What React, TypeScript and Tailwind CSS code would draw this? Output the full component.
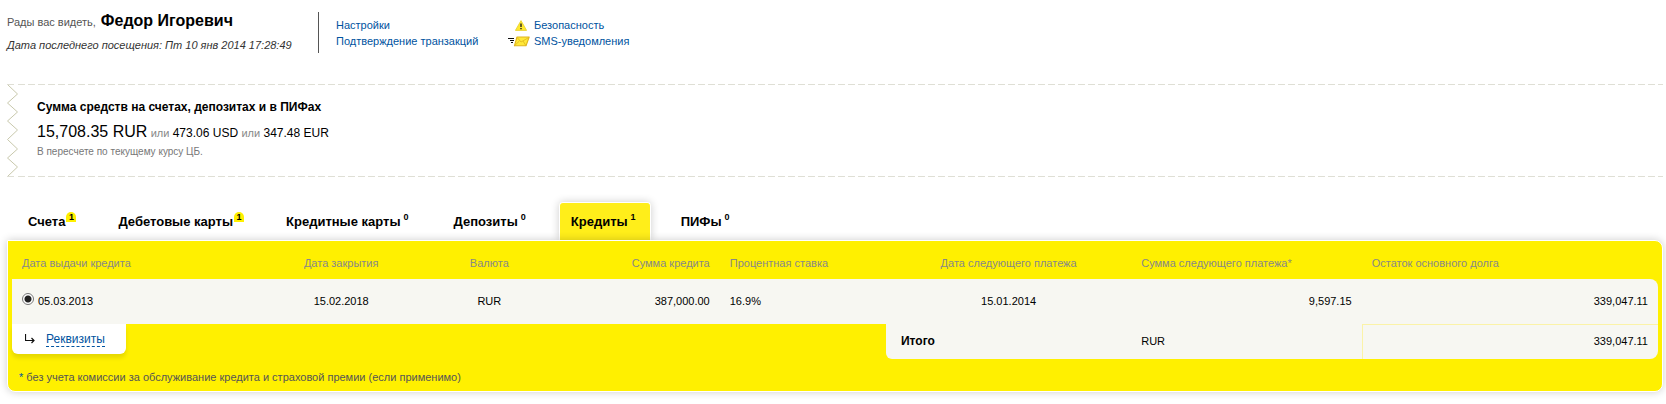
import React, { useState } from 'react';

const tabs = [
  { id: 'accounts', label: 'Счета', count: 1 },
  { id: 'debit', label: 'Дебетовые карты', count: 1 },
  { id: 'credit-cards', label: 'Кредитные карты', count: 0 },
  { id: 'deposits', label: 'Депозиты', count: 0 },
  { id: 'loans', label: 'Кредиты', count: 1 },
  { id: 'funds', label: 'ПИФы', count: 0 },
];

const loans = [
  {
    id: 'loan-1',
    opened: '05.03.2013',
    closes: '15.02.2018',
    currency: 'RUR',
    amount: '387,000.00',
    rate: '16.9%',
    nextDate: '15.01.2014',
    nextAmount: '9,597.15',
    balance: '339,047.11',
  },
];

const WarningIcon: React.FC = () => (
  <svg width="12" height="11" viewBox="0 0 12 11" aria-hidden="true">
    <path d="M6 0.6 L11.6 10.4 H0.4 Z" fill="#ffe92e" stroke="#e6cf2a" strokeWidth="0.8" strokeLinejoin="round" />
    <path d="M6 3.5 V7" stroke="#222" strokeWidth="1.4" />
    <path d="M6 8 V9.3" stroke="#222" strokeWidth="1.4" />
  </svg>
);

const SmsIcon: React.FC = () => (
  <svg width="22" height="11" viewBox="0 0 22 11" aria-hidden="true">
    <path d="M9 1 H21.2 L18 9.8 H6.4 Z" fill="#ffe838" stroke="#e0b51c" strokeWidth="1.1" strokeLinejoin="round" />
    <path d="M9.2 1.5 L13 6 L20.8 1.5 M6.8 9.4 L11.4 5 M17.8 9.4 L15 5" fill="none" stroke="#e0b51c" strokeWidth="0.8" />
    <path d="M0 2.5 H6 M2 4.5 H6 M3 6.5 H5" stroke="#111" strokeWidth="1" shapeRendering="crispEdges" />
  </svg>
);

const ArrowIcon: React.FC = () => (
  <svg width="10" height="10" viewBox="0 0 10 10" aria-hidden="true">
    <path d="M0.5 0 V6.5 H9 M6.5 4 L9 6.5 L6.5 9" fill="none" stroke="#111" strokeWidth="1.2" />
  </svg>
);

const Zigzag: React.FC = () => (
  <svg className="shrink-0" width="11" height="93" viewBox="0 0 11 93" aria-hidden="true">
    <path
      d="M0.5 0.5 L10.5 10 L0.5 19 L10.5 28 L0.5 37 L10.5 46 L0.5 55.5 L10.5 65 L0.5 74 L10.5 83 L0.5 92.5"
      fill="none"
      stroke="#c8c8ac"
      strokeWidth="1"
    />
    <path d="M0 0.5 H7 M0 92.5 H7" stroke="#dfdfd5" strokeWidth="1" />
  </svg>
);

const DashedLine: React.FC = () => (
  <div className="h-px bg-[repeating-linear-gradient(90deg,#dfdfd5_0_7px,transparent_7px_10px)]" />
);

const Greeting: React.FC = () => (
  <header className="flex pl-[7px] pt-3 text-[11px]">
    <div className="w-[311px] shrink-0">
      <div className="flex items-baseline gap-[5px] pt-px leading-4 text-[#555]">
        <span>Рады вас видеть,</span>
        <strong className="text-base leading-4 text-black">Федор Игоревич</strong>
      </div>
      <div className="mt-[7px] italic leading-4 text-[#333]">Дата последнего посещения: Пт 10 янв 2014 17:28:49</div>
    </div>
    <nav className="flex h-[41px] items-center border-l border-[#555] pl-[17px] pt-px leading-4 text-[#0053a0]">
      <div className="flex w-[172px] flex-col">
        <a href="#settings">Настройки</a>
        <a href="#confirm">Подтверждение транзакций</a>
      </div>
      <div className="flex flex-col">
        <a href="#security" className="flex items-center gap-1">
          <span className="flex w-[22px] justify-end pr-[3px]">
            <WarningIcon />
          </span>
          Безопасность
        </a>
        <a href="#sms" className="flex items-center gap-1">
          <SmsIcon />
          SMS-уведомления
        </a>
      </div>
    </nav>
  </header>
);

const Summary: React.FC = () => (
  <section className="mt-[31px] flex pl-[7px] pr-[3px]">
    <Zigzag />
    <div className="flex grow flex-col">
      <DashedLine />
      <div className="grow pl-[19px] pt-[14px]">
        <h2 className="text-xs font-bold leading-4 text-black">Сумма средств на счетах, депозитах и в ПИФах</h2>
        <p className="mt-[7px] text-xs leading-5 text-black">
          <span className="text-base leading-5">15,708.35 RUR</span>{' '}
          <span className="text-[11px] text-[#888]">или</span> 473.06 USD{' '}
          <span className="text-[11px] text-[#888]">или</span> 347.48 EUR
        </p>
        <p className="mt-px text-[10px] leading-4 text-[#777]">В пересчете по текущему курсу ЦБ.</p>
      </div>
      <DashedLine />
    </div>
  </section>
);

const tabShape =
  'flex h-[38px] items-start rounded-t border-x border-t px-[11px] pt-[9px] text-[13px] font-bold leading-5 text-black';
const activeTab = 'border-white bg-[#ffee1a] shadow-[0_0_8px_rgba(0,0,0,0.2)]';

export default function App() {
  const [tab, setTab] = useState('loans');
  const [selected, setSelected] = useState('loan-1');

  return (
    <div className="overflow-hidden bg-white pb-3 font-['Liberation_Sans',Arial,sans-serif]">
      <Greeting />
      <Summary />

      <div role="tablist" className="mt-[25px] flex gap-[18px] pl-4">
        {tabs.map((t) => {
          const active = t.id === tab;
          const badge = t.count > 0 && !active;
          return (
            <button
              key={t.id}
              type="button"
              role="tab"
              aria-selected={active}
              onClick={() => setTab(t.id)}
              className={`${tabShape} ${active ? activeTab : 'border-transparent'}`}
            >
              {t.label}
              <span
                className={`text-[9px] leading-[10px] ${
                  badge ? 'ml-px w-[10px] rounded-t-[5px] bg-[#fff000] text-center' : 'ml-[3px] mr-[3px]'
                }`}
              >
                {t.count}
              </span>
            </button>
          );
        })}
      </div>

      <section className="relative ml-[7px] mr-[3px] rounded-lg rounded-tl-none border border-white bg-[#fff000] px-1 text-[11px] leading-4 shadow-[0_0_8px_rgba(0,0,0,0.2)]">
        <table className="w-full table-fixed border-separate border-spacing-0">
          <colgroup>
            <col className="w-[16.4%]" />
            <col className="w-[7.2%]" />
            <col className="w-[10.8%]" />
            <col className="w-[8.6%]" />
            <col className="w-[10.1%]" />
            <col className="w-[14.9%]" />
            <col className="w-[14%]" />
            <col className="w-[18%]" />
          </colgroup>
          <thead>
            <tr className="h-[38px] text-[#888] [&>th]:whitespace-nowrap [&>th]:px-[10px] [&>th]:pt-[6px] [&>th]:font-normal">
              <th className="text-left">Дата выдачи кредита</th>
              <th>Дата закрытия</th>
              <th>Валюта</th>
              <th className="text-right">Сумма кредита</th>
              <th className="text-left">Процентная ставка</th>
              <th>Дата следующего платежа</th>
              <th className="text-left">Сумма следующего платежа*</th>
              <th className="text-left">Остаток основного долга</th>
            </tr>
          </thead>
          <tbody>
            {loans.map((loan) => (
              <tr key={loan.id} className="h-[45px] text-black [&>td]:bg-[#f7f7f2] [&>td]:px-[10px] [&>td]:pb-[2px]">
                <td>
                  <label className="flex items-center gap-1">
                    <input
                      type="radio"
                      name="loan"
                      checked={selected === loan.id}
                      onChange={() => setSelected(loan.id)}
                      className="mb-1 size-3 appearance-none rounded-full border border-[#777] bg-white checked:bg-[radial-gradient(circle,#222_3px,#fff_4px)]"
                    />
                    {loan.opened}
                  </label>
                </td>
                <td className="text-center">{loan.closes}</td>
                <td className="text-center">{loan.currency}</td>
                <td className="text-right">{loan.amount}</td>
                <td>{loan.rate}</td>
                <td className="text-center">{loan.nextDate}</td>
                <td className="text-right">{loan.nextAmount}</td>
                <td className="rounded-tr-lg text-right">{loan.balance}</td>
              </tr>
            ))}
            <tr className="h-[35px] text-black">
              <td colSpan={5} className="align-top">
                <div className="flex h-[30px] w-[114px] items-center gap-[11px] rounded-b-md bg-white pl-[13px] shadow-[0_4px_4px_rgba(0,0,0,0.1)]">
                  <ArrowIcon />
                  <a href="#details" className="border-b border-dashed border-[#0053a0] text-xs leading-[14px] text-[#0053a0]">
                    Реквизиты
                  </a>
                </div>
              </td>
              <td className="rounded-bl-md bg-[#f7f7f2] px-[15px] pb-[2px] text-xs font-bold">Итого</td>
              <td className="bg-[#f7f7f2] px-[10px] pb-[2px]">RUR</td>
              <td className="rounded-br-lg border-l border-t border-[#fbf3a8] bg-[#f7f7f2] px-[10px] pb-[2px] text-right">
                339,047.11
              </td>
            </tr>
          </tbody>
        </table>
        <p className="px-[7px] pb-[6px] pt-[10px] text-[#555]">
          <span className="text-[#0053a0]">*</span> без учета комиссии за обслуживание кредита и страховой премии (если
          применимо)
        </p>
      </section>
    </div>
  );
}
